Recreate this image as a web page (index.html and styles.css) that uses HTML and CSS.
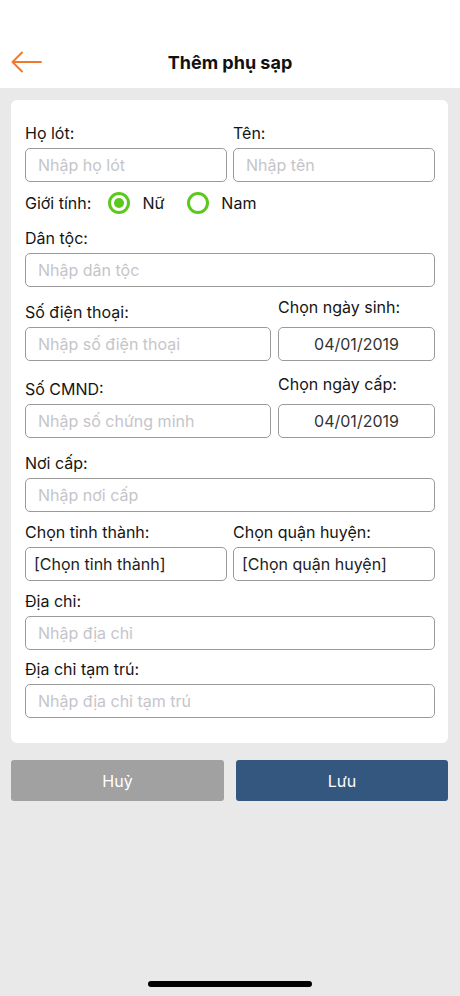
FILE: index.html
```html
<!DOCTYPE html>
<html lang="vi">
<head>
    <meta charset="UTF-8">
    <meta name="viewport" content="width=device-width, initial-scale=1.0">
    <title>Thêm phụ sạp</title>
    <link rel="stylesheet" href="styles.css">
</head>
<body>

<div class="header">
    <button class="back" type="button" aria-label="Quay lại">
        <svg width="32" height="22" viewBox="0 0 32 22" fill="none" stroke="#f07a2a" stroke-width="2" stroke-linecap="round" stroke-linejoin="round">
            <path d="M30 11H2"/>
            <path d="M11 1.5L1.5 11L11 20.5"/>
        </svg>
    </button>
    <h1>Thêm phụ sạp</h1>
</div>

<div class="content">
    <form class="card" id="phuSapForm">
        <div class="row two">
            <div class="field">
                <label for="holot">Họ lót:</label>
                <input type="text" id="holot" placeholder="Nhập họ lót">
            </div>
            <div class="field">
                <label for="ten">Tên:</label>
                <input type="text" id="ten" placeholder="Nhập tên">
            </div>
        </div>

        <div class="gender">
            <span class="gender-label">Giới tính:</span>
            <label class="radio"><input type="radio" name="gioitinh" value="nu" checked><span class="dot"></span>Nữ</label>
            <label class="radio"><input type="radio" name="gioitinh" value="nam"><span class="dot"></span>Nam</label>
        </div>

        <div class="field gap-14">
            <label for="dantoc">Dân tộc:</label>
            <input type="text" id="dantoc" placeholder="Nhập dân tộc">
        </div>

        <div class="row date-row gap-15">
            <div class="field">
                <label for="sdt">Số điện thoại:</label>
                <input type="text" id="sdt" placeholder="Nhập số điện thoại">
            </div>
            <div class="field date">
                <label>Chọn ngày sinh:</label>
                <div class="box center">04/01/2019</div>
            </div>
        </div>

        <div class="row date-row gap-18">
            <div class="field">
                <label for="cmnd">Số CMND:</label>
                <input type="text" id="cmnd" placeholder="Nhập số chứng minh">
            </div>
            <div class="field date">
                <label>Chọn ngày cấp:</label>
                <div class="box center">04/01/2019</div>
            </div>
        </div>

        <div class="field gap-15">
            <label for="noicap">Nơi cấp:</label>
            <input type="text" id="noicap" placeholder="Nhập nơi cấp">
        </div>

        <div class="row two gap-10">
            <div class="field">
                <label>Chọn tỉnh thành:</label>
                <div class="box">[Chọn tỉnh thành]</div>
            </div>
            <div class="field">
                <label>Chọn quận huyện:</label>
                <div class="box">[Chọn quận huyện]</div>
            </div>
        </div>

        <div class="field gap-10">
            <label for="diachi">Địa chỉ:</label>
            <input type="text" id="diachi" placeholder="Nhập địa chỉ">
        </div>

        <div class="field gap-9">
            <label for="tamtru">Địa chỉ tạm trú:</label>
            <input type="text" id="tamtru" placeholder="Nhập địa chỉ tạm trú">
        </div>
    </form>

    <div class="actions">
        <button type="button" class="btn cancel">Huỷ</button>
        <button type="submit" form="phuSapForm" class="btn save">Lưu</button>
    </div>
</div>

<div class="home-bar"></div>

</body>
</html>
```

FILE: styles.css
```css
/* Estilos generales */
html, body {
    height: 100%;
}
body {
    font-family: 'Inter', 'Roboto', sans-serif;
    background-color: #e9e9e9;
    margin: 0;
    color: #151515;
    display: flex;
    flex-direction: column;
}
/* Cabecera */
.header {
    height: 88px;
    background-color: #fff;
    position: relative;
    display: flex;
    align-items: center;
    justify-content: center;
    padding-top: 36px;
    box-sizing: border-box;
}
.header h1 {
    margin: 0;
    font-size: 18px;
    font-weight: 700;
    color: #111;
}
.back {
    position: absolute;
    left: 11px;
    top: 51px;
    padding: 0;
    border: none;
    background: none;
    line-height: 0;
}
/* Contenido */
.content {
    flex: 1;
    padding: 12px 12px 0 11px;
}
.card {
    background-color: #fff;
    border-radius: 6px;
    padding: 23px 13px 25px 14px;
}
.row {
    display: grid;
    column-gap: 6px;
}
.row.two {
    grid-template-columns: 1fr 1fr;
}
.row.date-row {
    grid-template-columns: 246px 1fr;
    column-gap: 7px;
}
.field {
    display: flex;
    flex-direction: column;
}
.field label {
    font-size: 16px;
    line-height: 20px;
    margin-bottom: 5px;
}
.field.date label {
    margin-top: -5px;
    margin-bottom: 10px;
}
input, .box {
    height: 34px;
    box-sizing: border-box;
    border: 1px solid #9a9a9a;
    border-radius: 5px;
    font-family: inherit;
    font-size: 16px;
    color: #222;
    outline: none;
    width: 100%;
}
input {
    padding: 0 12px;
}
input::placeholder {
    color: #c5c5c9;
}
.box {
    display: flex;
    align-items: center;
    padding: 0 8px;
}
.box.center {
    justify-content: center;
    color: #333;
}
.gap-9 { margin-top: 9px; }
.gap-10 { margin-top: 10px; }
.gap-14 { margin-top: 14px; }
.gap-15 { margin-top: 15px; }
.gap-18 { margin-top: 18px; }
/* Giới tính */
.gender {
    display: flex;
    align-items: center;
    height: 22px;
    margin-top: 10px;
    font-size: 16px;
}
.gender-label {
    margin-right: 17px;
}
.radio {
    display: flex;
    align-items: center;
    margin-right: 23px;
}
.radio input {
    display: none;
}
.dot {
    width: 22px;
    height: 22px;
    box-sizing: border-box;
    border: 3px solid #5cc71c;
    border-radius: 50%;
    margin-right: 12px;
    display: flex;
    align-items: center;
    justify-content: center;
}
.radio input:checked + .dot::after {
    content: "";
    width: 10px;
    height: 10px;
    border-radius: 50%;
    background-color: #5cc71c;
}
/* Botones */
.actions {
    display: grid;
    grid-template-columns: 213px 1fr;
    column-gap: 12px;
    margin-top: 17px;
}
.btn {
    height: 41px;
    border: none;
    border-radius: 3px;
    color: #fff;
    font-family: inherit;
    font-size: 16px;
}
.cancel {
    background-color: #a1a1a1;
}
.save {
    background-color: #33577f;
}
/* Barra inferior */
.home-bar {
    width: 164px;
    height: 6px;
    border-radius: 3px;
    background-color: #000;
    margin: 0 auto 9px;
}
```
